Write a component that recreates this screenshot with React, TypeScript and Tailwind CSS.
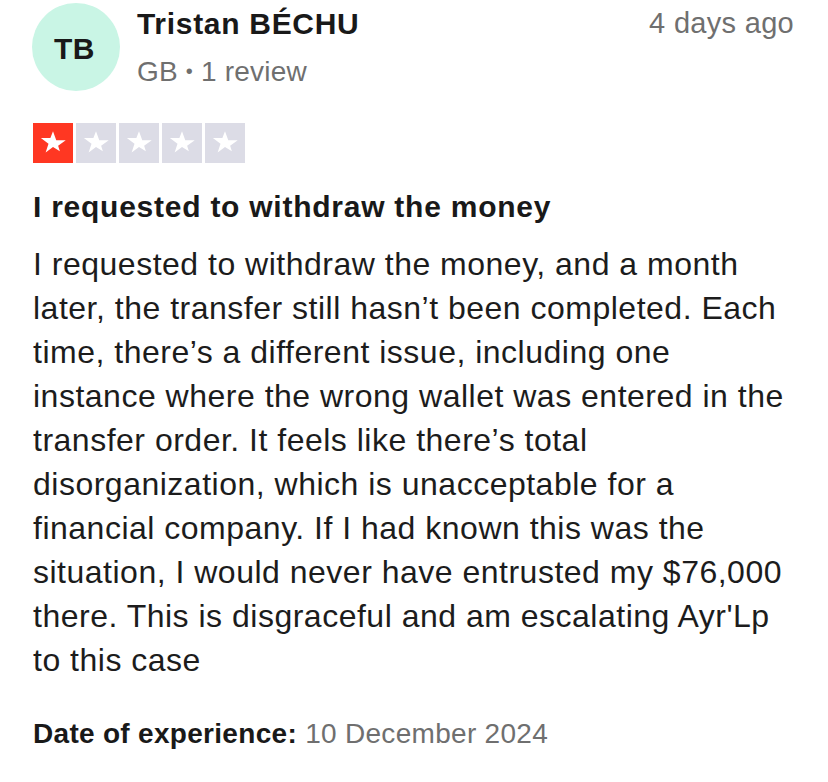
const LINES = [
  "I requested to withdraw the money, and a month",
  "later, the transfer still hasn’t been completed. Each",
  "time, there’s a different issue, including one",
  "instance where the wrong wallet was entered in the",
  "transfer order. It feels like there’s total",
  "disorganization, which is unacceptable for a",
  "financial company. If I had known this was the",
  "situation, I would never have entrusted my $76,000",
  "there. This is disgraceful and am escalating Ayr'Lp",
  "to this case",
];

function Star({ filled }: { filled: boolean }) {
  return (
    <div
      className={`flex h-[40px] w-[40px] items-center justify-center ${
        filled ? "bg-[#ff3722]" : "bg-[#dcdce6]"
      }`}
    >
      <svg viewBox="0 0 24 24" className="h-[30px] w-[30px]">
        <path
          d="M12 2.6l2.6 7.1h7.6l-6.1 4.5 1.4 4.4L12 15.2l-5.9 4.4 2.3-7.1-6.1-4.5h7.6z"
          fill="#ffffff"
        />
      </svg>
    </div>
  );
}

export default function App() {
  return (
    <div className="h-[782px] w-[828px] overflow-hidden bg-white pl-[33px] pr-[34px] pt-[3px] font-['Liberation_Sans',Arial,sans-serif] text-[#191919]">
      <div className="flex items-start">
        <div className="-ml-[1px] flex h-[88px] w-[88px] shrink-0 items-center justify-center rounded-full bg-[#c9f5e5] pr-[3px] pt-[3px] text-[30px] font-bold tracking-[0.5px]">
          TB
        </div>
        <div className="ml-[17px] flex flex-1 items-start justify-between">
          <div className="flex flex-col pt-[3px]">
            <span className="text-[30px] font-bold leading-[36px] tracking-[0.7px]">
              Tristan BÉCHU
            </span>
            <span className="mt-[12px] text-[28px] leading-[34px] tracking-[0.2px] text-[#6f6f6f]">
              GB <span className="align-[3px] text-[20px]">•</span> 1 review
            </span>
          </div>
          <span className="pt-[2px] text-[29px] leading-[36px] tracking-[0.3px] text-[#6f6f6f]">
            4 days ago
          </span>
        </div>
      </div>

      <div className="mt-[32px] flex gap-[3px]">
        {[0, 1, 2, 3, 4].map((i) => (
          <Star key={i} filled={i === 0} />
        ))}
      </div>

      <h2 className="mt-[27px] text-[30px] font-bold leading-[34px] tracking-[0.75px]">
        I requested to withdraw the money
      </h2>

      <p className="mt-[18px] text-[32px] leading-[44px] tracking-[0.5px] text-[#1c1c1c]">
        {LINES.map((line, i) => (
          <span key={i} className="block whitespace-nowrap">
            {line}
          </span>
        ))}
      </p>

      <div className="mt-[35px] text-[28px] leading-[34px] tracking-[0.3px]">
        <span className="font-bold">Date of experience:</span>{" "}
        <span className="text-[#6f6f6f]">10 December 2024</span>
      </div>
    </div>
  );
}
